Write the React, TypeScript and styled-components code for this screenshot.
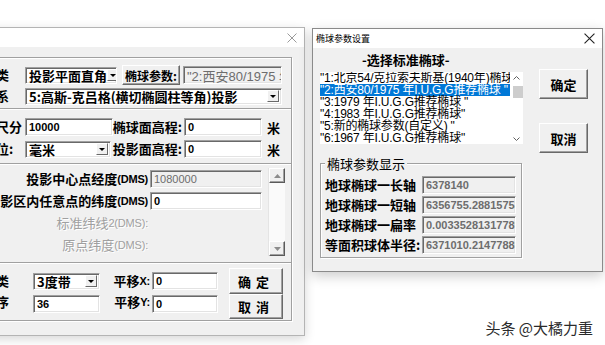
import styled, { createGlobalStyle } from "styled-components";

const GlobalStyle = createGlobalStyle`
  html, body {
    margin: 0;
    padding: 0;
    background: #fff;
  }
  body {
    width: 605px;
    height: 345px;
    overflow: hidden;
    font-family: "Noto Sans CJK SC", "Liberation Sans", sans-serif;
  }
  * { box-sizing: border-box; }
`;

const CJK = `"Noto Sans CJK SC", "Liberation Sans", sans-serif`;
const MIXED = `"Liberation Sans", "Noto Sans CJK SC", sans-serif`;

const Desktop = styled.div`
  display: flex;
  align-items: flex-start;
  width: 605px;
  height: 345px;
  overflow: hidden;
`;

/* ---------- window frame ---------- */
const LeftWindow = styled.div`
  flex: none;
  width: 345px;
  margin-left: -40px;
  margin-top: 27px;
  border: 1px solid #b4b4b4;
  background: #f0f0f0;
  box-shadow: 0 3px 10px rgba(0, 0, 0, 0.16);
`;

const RightColumn = styled.div`
  flex: none;
  display: flex;
  flex-direction: column;
  margin-left: 7px;
  margin-top: 28px;
`;

const RightWindow = styled.div`
  width: 291px;
  border: 1px solid #8a8a8a;
  background: #f0f0f0;
  box-shadow: 0 4px 12px rgba(0, 0, 0, 0.2);
`;

const TitleBar = styled.div<{ $h: number }>`
  height: ${(p) => p.$h}px;
  background: #fff;
  display: flex;
  align-items: center;
  justify-content: space-between;
  padding: 0 7px 0 3px;
`;

const TitleText = styled.span`
  font: 9px ${CJK};
  color: #000;
`;

/* ---------- left dialog ---------- */
const LeftBody = styled.div`
  padding: 10px 12px 14px 3px;
`;

const Frame = styled.div`
  border: 1px solid #a0a0a0;
  box-shadow: 1px 1px 0 #fff, inset 1px 1px 0 #fff;
`;

const Section = styled.div<{ $first?: boolean; $pt: number; $pb: number }>`
  padding: ${(p) => p.$pt}px 5px ${(p) => p.$pb}px 5px;
  border-top: ${(p) => (p.$first ? "none" : "1px solid #a0a0a0")};
  box-shadow: ${(p) => (p.$first ? "none" : "inset 0 1px 0 #fff")};
  display: flex;
  flex-direction: column;
  gap: ${(p) => (p.$first ? 2 : 0)}px;
`;

const Row = styled.div<{ $h: number; $align?: string }>`
  height: ${(p) => p.$h}px;
  display: flex;
  align-items: ${(p) => p.$align ?? "center"};
`;

const Label = styled.span<{ $w?: number; $right?: boolean; $off?: boolean }>`
  flex: none;
  width: ${(p) => (p.$w ? `${p.$w}px` : "auto")};
  display: flex;
  align-items: center;
  justify-content: ${(p) => (p.$right ? "flex-end" : "flex-start")};
  padding-right: ${(p) => (p.$right ? 2 : 0)}px;
  white-space: nowrap;
  font: ${(p) => (p.$off ? 400 : 700)} 13px ${CJK};
  color: ${(p) => (p.$off ? "#a0a0a0" : "#000")};
  text-shadow: ${(p) => (p.$off ? "1px 1px 0 #fff" : "none")};
  line-height: 16px;
`;

/* latin part of a label, e.g. (DMS), narrower than the CJK font's latin */
const Latin = styled.span`
  font: inherit;
  font-family: ${MIXED};
  font-size: 11px;
  letter-spacing: -0.2px;
`;

const Unit = styled.span`
  padding-left: 5px;
  font: 700 13px ${CJK};
`;

const TextBox = styled.div<{ $w: number; $off?: boolean; $bold?: boolean; $mt?: number }>`
  flex: none;
  width: ${(p) => p.$w}px;
  height: 18px;
  margin-top: ${(p) => p.$mt ?? 0}px;
  background: ${(p) => (p.$off ? "#f0f0f0" : "#fff")};
  border: 1px solid;
  border-color: #a0a0a0 #fff #fff #a0a0a0;
  box-shadow: inset 1px 1px 0 #696969, inset -1px -1px 0 #e3e3e3;
  padding: 0 3px;
  display: flex;
  align-items: center;
  overflow: hidden;
  white-space: nowrap;
  font: ${(p) => (p.$off && !p.$bold ? 400 : 700)} 11px "Liberation Sans", Arial, sans-serif;
  color: ${(p) => (p.$off ? "#6d6d6d" : "#000")};
`;

const WideText = styled.span`
  font: 400 13px ${MIXED};
`;

const Select = styled.div<{ $w: number; $mt?: number }>`
  flex: none;
  width: ${(p) => p.$w}px;
  height: 17px;
  margin-top: ${(p) => p.$mt ?? 0}px;
  background: #fff;
  border: 1px solid;
  border-color: #a0a0a0 #fff #fff #a0a0a0;
  box-shadow: inset 1px 1px 0 #696969, inset -1px -1px 0 #e3e3e3;
  padding: 0 2px 0 3px;
  display: flex;
  align-items: center;
  justify-content: space-between;
  white-space: nowrap;
  overflow: hidden;
  font: 700 13px ${CJK};
  color: #000;
`;

const DropArrow = styled.span`
  flex: none;
  width: 12px;
  height: 12px;
  background: #f0f0f0;
  border: 1px solid;
  border-color: #fff #696969 #696969 #fff;
  display: flex;
  align-items: center;
  justify-content: center;
  &::after {
    content: "";
    border-left: 3px solid transparent;
    border-right: 3px solid transparent;
    border-top: 3px solid #000;
  }
`;

const Button = styled.button<{ $w: number; $h: number; $gap?: number; $size?: number }>`
  flex: none;
  width: ${(p) => p.$w}px;
  height: ${(p) => p.$h}px;
  padding: 0;
  white-space: nowrap;
  background: #f0f0f0;
  border: 1px solid;
  border-color: #fff #696969 #696969 #fff;
  box-shadow: inset -1px -1px 0 #a0a0a0;
  font: 700 ${(p) => p.$size ?? 13}px ${CJK};
  letter-spacing: ${(p) => p.$gap ?? 0}px;
  color: #000;
`;

const Spacer = styled.span<{ $w: number }>`
  flex: none;
  width: ${(p) => p.$w}px;
`;

/* scrolling parameter area: labels + inputs on the left, scrollbar on the right */
const ParamGrid = styled.div`
  display: grid;
  grid-template-columns: 180px 112px 18px;
  grid-template-rows: repeat(4, 22px);
  column-gap: 0;
  align-items: center;
`;

const VScroll = styled.div`
  grid-column: 3;
  grid-row: 1 / 5;
  align-self: stretch;
  margin-left: 6px;
  width: 17px;
  background: #fafafa;
  border-left: 1px solid #e4e4e4;
  display: flex;
  flex-direction: column;
  justify-content: space-between;
`;

const ScrollButton = styled.div`
  height: 15px;
  background: #f0f0f0;
  border: 1px solid;
  border-color: #fff #5a5a5a #5a5a5a #fff;
  box-shadow: inset -1px -1px 0 #a0a0a0;
  display: flex;
  align-items: center;
  justify-content: center;
`;

/* ---------- right dialog ---------- */
const RightBody = styled.div`
  display: flex;
  padding: 5px 0 13px 7px;
`;

const ChooserColumn = styled.div`
  width: 203px;
  display: flex;
  flex-direction: column;
`;

const Heading = styled.div`
  padding-left: 42px;
  margin-bottom: 5px;
  font: 700 13px ${CJK};
  line-height: 14px;
  color: #000;
`;

const ListBox = styled.div`
  height: 72px;
  display: flex;
  background: #fff;
  overflow: hidden;
`;

const ListItems = styled.div`
  width: 190px;
  flex: none;
  display: flex;
  flex-direction: column;
  overflow: hidden;
`;

const ListItem = styled.div<{ $sel?: boolean }>`
  flex: none;
  height: 12px;
  white-space: nowrap;
  font: 400 12px ${MIXED};
  letter-spacing: -0.2px;
  line-height: 12px;
  color: ${(p) => (p.$sel ? "#fff" : "#000")};
  background: ${(p) => (p.$sel ? "#0078d7" : "transparent")};
`;

const ListScroll = styled.div`
  width: 13px;
  flex: none;
  background: #fff;
  display: flex;
  flex-direction: column;
  align-items: center;
  justify-content: space-between;
  padding: 4px 0 3px;
`;

const Thumb = styled.div`
  width: 10px;
  height: 12px;
  margin-left: 2px;
  margin-bottom: 34px;
  background: #cdcdcd;
`;

const Group = styled.fieldset`
  margin: 12px 0 0;
  width: 202px;
  padding: 5px 5px 3px 4px;
  border: 1px solid #a0a0a0;
  box-shadow: 1px 1px 0 #fff, inset 1px 1px 0 #fff;
  display: flex;
  flex-direction: column;
  gap: 2px;
`;

const Legend = styled.legend`
  padding: 0 2px;
  background: #f0f0f0;
  font: 400 13px ${CJK};
  line-height: 15px;
  color: #000;
`;

const ButtonColumn = styled.div`
  display: flex;
  flex-direction: column;
  gap: 24px;
  margin-left: 16px;
  padding-top: 16px;
`;

const Watermark = styled.div`
  align-self: flex-end;
  margin-top: 45px;
  margin-right: 10px;
  font: 400 15px ${CJK};
  color: #2a2a2a;
  text-shadow: 0 0 2px #fff;
`;

/* ---------- small drawings ---------- */
function CloseIcon({ color, size }: { color: string; size: number }) {
  return (
    <svg width={size} height={size} viewBox="0 0 10 10">
      <path d="M0.5 0.5L9.5 9.5M9.5 0.5L0.5 9.5" stroke={color} strokeWidth="1" fill="none" />
    </svg>
  );
}

function Tri({ up }: { up?: boolean }) {
  return (
    <svg width="7" height="4" viewBox="0 0 7 4">
      <path d={up ? "M0 4L3.5 0L7 4Z" : "M0 0L3.5 4L7 0Z"} fill="#8c8c8c" />
    </svg>
  );
}

function Chevron({ up }: { up?: boolean }) {
  return (
    <svg width="7" height="4" viewBox="0 0 7 4">
      <path d={up ? "M0.5 3.5L3.5 0.5L6.5 3.5" : "M0.5 0.5L3.5 3.5L6.5 0.5"} stroke="#606060" fill="none" />
    </svg>
  );
}

const ellipsoids = [
  '"1:北京54/克拉索夫斯基(1940年)椭球"',
  '"2:西安80/1975 年I.U.G.G推荐椭球 "',
  '"3:1979 年I.U.G.G推荐椭球 "',
  '"4:1983 年I.U.G.G推荐椭球"',
  '"5:新的椭球参数(自定义)  "',
  '"6:1967 年I.U.G.G推荐椭球"',
];

const params = [
  ["地球椭球一长轴", "6378140"],
  ["地球椭球一短轴", "6356755.28815753"],
  ["地球椭球一扁率", "0.00335281317789"],
  ["等面积球体半径:", "6371010.21477885"],
];

function ProjectionDialog() {
  return (
    <LeftWindow>
      <TitleBar $h={19}>
        <span />
        <CloseIcon color="#9a9a9a" size={10} />
      </TitleBar>
      <LeftBody>
        <Frame>
          <Section $first $pt={7} $pb={3}>
            <Row $h={20}>
              <Label $w={55}>投影类</Label>
              <Select $w={92}>
                投影平面直角
                <DropArrow />
              </Select>
              <Spacer $w={5} />
              <Button $w={58} $h={20} $size={12}>椭球参数:</Button>
              <Spacer $w={3} />
              <TextBox $w={99} $off>
                <WideText>"2:西安80/1975 年I.U.G.G推荐椭球"</WideText>
              </TextBox>
            </Row>
            <Row $h={18}>
              <Label $w={55}>坐标系</Label>
              <Select $w={257}>
                5:高斯-克吕格(横切椭圆柱等角)投影
                <DropArrow />
              </Select>
            </Row>
          </Section>

          <Section $pt={7} $pb={3}>
            <Row $h={22}>
              <Label $w={55}>比例尺分</Label>
              <TextBox $w={88}>10000</TextBox>
              <Label $w={71} $right>椭球面高程:</Label>
              <TextBox $w={78}>0</TextBox>
              <Unit>米</Unit>
            </Row>
            <Row $h={22}>
              <Label $w={55}>图单位:</Label>
              <Select $w={86}>
                毫米
                <DropArrow />
              </Select>
              <Spacer $w={2} />
              <Label $w={71} $right>投影面高程:</Label>
              <TextBox $w={78}>0</TextBox>
              <Unit>米</Unit>
            </Row>
          </Section>

          <Section $pt={4} $pb={6}>
            <ParamGrid>
              <Label $w={180} $right>
                投影中心点经度<Latin>(DMS)</Latin>
              </Label>
              <TextBox $w={112} $off>1080000</TextBox>
              <VScroll>
                <ScrollButton>
                  <Tri up />
                </ScrollButton>
                <ScrollButton>
                  <Tri />
                </ScrollButton>
              </VScroll>
              <Label $w={180} $right>
                投影区内任意点的纬度<Latin>(DMS)</Latin>
              </Label>
              <TextBox $w={112}>0</TextBox>
              <Label $w={180} $right $off>
                标准纬线<Latin>2(DMS):</Latin>
              </Label>
              <span />
              <Label $w={180} $right $off>
                原点纬度<Latin>(DMS):</Latin>
              </Label>
              <span />
            </ParamGrid>
          </Section>

          <Section $pt={5} $pb={0}>
            <Row $h={26}>
              <Label $w={63}>分带类</Label>
              <Select $w={67}>
                3度带
                <DropArrow />
              </Select>
              <Label $w={52} $right>
                平移<Latin>X:</Latin>
              </Label>
              <TextBox $w={66}>0</TextBox>
              <Spacer $w={11} />
              <Button $w={54} $h={26} $gap={5}>确定</Button>
            </Row>
            <Row $h={26} $align="flex-start">
              <Label $w={63}>分带序</Label>
              <TextBox $w={67} $mt={1}>36</TextBox>
              <Label $w={52} $right>
                平移<Latin>Y:</Latin>
              </Label>
              <TextBox $w={66} $mt={1}>0</TextBox>
              <Spacer $w={11} />
              <Button $w={54} $h={25} $gap={5}>取消</Button>
            </Row>
          </Section>
        </Frame>
      </LeftBody>
    </LeftWindow>
  );
}

function EllipsoidDialog() {
  return (
    <RightWindow>
      <TitleBar $h={19}>
        <TitleText>椭球参数设置</TitleText>
        <CloseIcon color="#222" size={11} />
      </TitleBar>
      <RightBody>
        <ChooserColumn>
          <Heading>-选择标准椭球-</Heading>
          <ListBox>
            <ListItems>
              {ellipsoids.map((e, i) => (
                <ListItem key={e} $sel={i === 1}>
                  {e}
                </ListItem>
              ))}
            </ListItems>
            <ListScroll>
              <Chevron up />
              <Thumb />
              <Chevron />
            </ListScroll>
          </ListBox>
          <Group>
            <Legend>椭球参数显示</Legend>
            {params.map(([name, value]) => (
              <Row $h={18} key={name}>
                <Label $w={97}>{name}</Label>
                <TextBox $w={94} $off $bold>
                  {value}
                </TextBox>
              </Row>
            ))}
          </Group>
        </ChooserColumn>
        <ButtonColumn>
          <Button $w={49} $h={30}>确定</Button>
          <Button $w={49} $h={30}>取消</Button>
        </ButtonColumn>
      </RightBody>
    </RightWindow>
  );
}

export default function App() {
  return (
    <>
      <GlobalStyle />
      <Desktop>
        <ProjectionDialog />
        <RightColumn>
          <EllipsoidDialog />
          <Watermark>头条 @大橘力重</Watermark>
        </RightColumn>
      </Desktop>
    </>
  );
}
